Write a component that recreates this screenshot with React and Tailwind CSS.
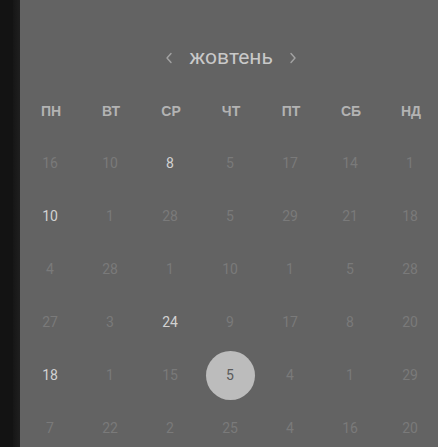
import React from 'react';

const WEEKDAYS = ['ПН', 'ВТ', 'СР', 'ЧТ', 'ПТ', 'СБ', 'НД'];

// [day, state] state: 0 faint, 1 bright, 2 selected
const ROWS = [
    [[16, 0], [10, 0], [8, 1], [5, 0], [17, 0], [14, 0], [1, 0]],
    [[10, 1], [1, 0], [28, 0], [5, 0], [29, 0], [21, 0], [18, 0]],
    [[4, 0], [28, 0], [1, 0], [10, 0], [1, 0], [5, 0], [28, 0]],
    [[27, 0], [3, 0], [24, 1], [9, 0], [17, 0], [8, 0], [20, 0]],
    [[18, 1], [1, 0], [15, 0], [5, 2], [4, 0], [1, 0], [29, 0]],
    [[7, 0], [22, 0], [2, 0], [25, 0], [4, 0], [16, 0], [20, 0]],
];

const Chevron = ({ dir }) => (
    <svg width="8" height="12" viewBox="0 0 8 12" fill="none">
        <path
            d={dir === 'left' ? 'M6 1.5 L2 6 L6 10.5' : 'M2 1.5 L6 6 L2 10.5'}
            stroke="#a3a3a3"
            strokeWidth="1.4"
            strokeLinecap="round"
            strokeLinejoin="round"
        />
    </svg>
);

const DayCell = ({ day, state }) => {
    if (state === 2) {
        return (
            <div className="h-[53px] flex items-center justify-center">
                <div className="w-[49px] h-[49px] rounded-full bg-[#bcbcbc] flex items-center justify-center text-[#5a5a5a] text-[14px]">
                    {day}
                </div>
            </div>
        );
    }
    return (
        <div className={`h-[53px] flex items-center justify-center text-[14px] ${state === 1 ? 'text-[#d2d2d2]' : 'text-[#7a7a7a]'}`}>
            {day}
        </div>
    );
};

export default function App() {
    return (
        <div className="w-full h-[447px] flex overflow-hidden bg-[#131313]" style={{ fontFamily: 'Roboto, "Noto Sans", sans-serif' }}>
            <div className="w-[13px] shrink-0 bg-[#131313]" />
            <div className="w-[7px] shrink-0 bg-gradient-to-r from-[#161616] to-[#1f1f1f]" />
            <div className="flex-1 min-w-0 overflow-hidden bg-[#636363]">
                <div className="w-[420px] pt-[45px]">
                    <div className="h-[26px] flex items-center justify-center gap-[16px] pl-[2px]">
                        <Chevron dir="left" />
                        <span className="text-[21px] leading-none text-[#c9c9c9] pb-[2px]">жовтень</span>
                        <Chevron dir="right" />
                    </div>
                    <div className="grid grid-cols-7 mt-[14px] h-[52px] items-center">
                        {WEEKDAYS.map((d) => (
                            <div key={d} className="text-center text-[14px] font-bold text-[#b3b3b3] pl-[2px]" style={{ fontFamily: '"Liberation Sans", Arial, sans-serif' }}>
                                {d}
                            </div>
                        ))}
                    </div>
                    {ROWS.map((row, i) => (
                        <div key={i} className="grid grid-cols-7">
                            {row.map(([day, state], j) => (
                                <DayCell key={j} day={day} state={state} />
                            ))}
                        </div>
                    ))}
                </div>
            </div>
        </div>
    );
}
